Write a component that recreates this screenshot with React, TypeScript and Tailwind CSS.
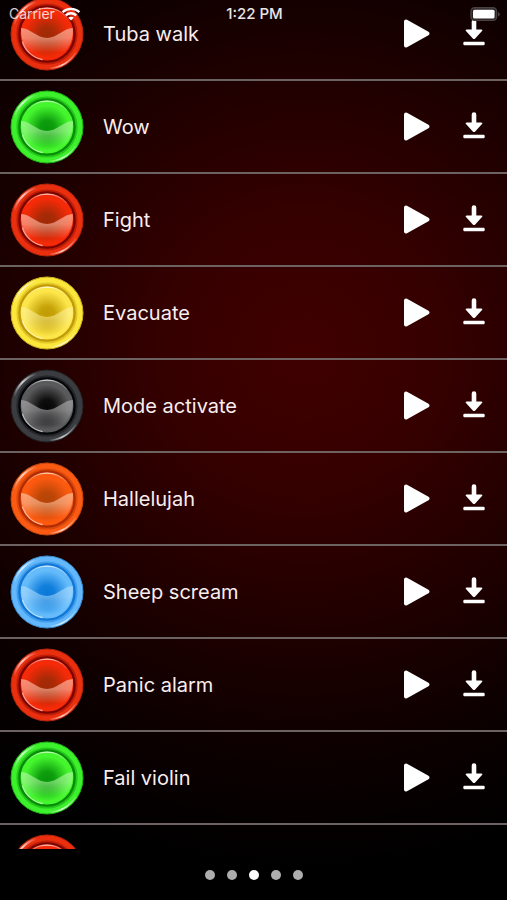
import { useId, useState } from "react";

type Palette = {
  rim: string;
  rimEdge: string;
  groove: string;
  face: string;
  core: string;
  shine: string;
  shineOpacity: number;
};

const palettes: Record<string, Palette> = {
  red: { rim: "#ea2f0e", rimEdge: "#b8250c", groove: "#7c0400", face: "#f52a08", core: "#a02a06", shine: "#f9b29c", shineOpacity: 0.75 },
  green: { rim: "#3df02c", rimEdge: "#1fb814", groove: "#068c06", face: "#45f62e", core: "#08950a", shine: "#b4f8a6", shineOpacity: 0.65 },
  yellow: { rim: "#fbe63c", rimEdge: "#cdb31c", groove: "#c09a08", face: "#fde64a", core: "#c09c02", shine: "#fff3a0", shineOpacity: 0.6 },
  black: { rim: "#3a3c40", rimEdge: "#222325", groove: "#050608", face: "#5a5a5c", core: "#060606", shine: "#a2a2a4", shineOpacity: 0.75 },
  orange: { rim: "#fb5a12", rimEdge: "#c9480e", groove: "#b02c02", face: "#fd5a10", core: "#b54406", shine: "#fdc09c", shineOpacity: 0.7 },
  blue: { rim: "#62b8fb", rimEdge: "#3c8cd2", groove: "#1276d6", face: "#66bcfb", core: "#0878d8", shine: "#b4e0ff", shineOpacity: 0.6 },
};

const sounds = [
  { name: "Tuba walk", color: "red" },
  { name: "Wow", color: "green" },
  { name: "Fight", color: "red" },
  { name: "Evacuate", color: "yellow" },
  { name: "Mode activate", color: "black" },
  { name: "Hallelujah", color: "orange" },
  { name: "Sheep scream", color: "blue" },
  { name: "Panic alarm", color: "red" },
  { name: "Fail violin", color: "green" },
  { name: "", color: "red" },
];

function SoundDisc({ color }: { color: string }) {
  const id = useId();
  const p = palettes[color];

  return (
    <svg viewBox="0 0 74 74" className="size-[74px] shrink-0" aria-hidden="true">
      <defs>
        <radialGradient id={`${id}core`} gradientUnits="userSpaceOnUse" cx="37" cy="38" r="25">
          <stop offset="0" stopColor={p.core} />
          <stop offset="0.3" stopColor={p.core} stopOpacity="0.9" />
          <stop offset="0.7" stopColor={p.core} stopOpacity="0.3" />
          <stop offset="0.9" stopColor={p.core} stopOpacity="0" />
        </radialGradient>
        <linearGradient id={`${id}shine`} gradientUnits="userSpaceOnUse" x1="0" y1="31" x2="0" y2="60">
          <stop offset="0" stopColor={p.shine} stopOpacity={p.shineOpacity} />
          <stop offset="0.35" stopColor={p.shine} stopOpacity={p.shineOpacity * 0.85} />
          <stop offset="0.85" stopColor={p.shine} stopOpacity="0" />
        </linearGradient>
        <linearGradient id={`${id}top`} x1="0" y1="1" x2="1" y2="0">
          <stop offset="0" stopColor="#fff" stopOpacity="0" />
          <stop offset="0.5" stopColor="#fff" stopOpacity="0.75" />
          <stop offset="1" stopColor="#fff" stopOpacity="0" />
        </linearGradient>
        <linearGradient id={`${id}arc`} x1="0" y1="0" x2="1" y2="0">
          <stop offset="0" stopColor="#fff" stopOpacity="0.1" />
          <stop offset="0.5" stopColor="#fff" stopOpacity="0.75" />
          <stop offset="1" stopColor="#fff" stopOpacity="0.1" />
        </linearGradient>
      </defs>
      <circle cx="37" cy="37" r="36" fill={p.rim} stroke={p.rimEdge} />
      <circle cx="37" cy="37" r="28.6" fill="none" stroke={p.groove} strokeOpacity="0.4" strokeWidth="4" />
      <circle cx="37" cy="37" r="27.6" fill={p.face} stroke={p.groove} strokeWidth="2.4" />
      <circle cx="37" cy="37" r="26" fill={`url(#${id}core)`} />
      <path d="M11.2 31C20 31 27 41 37 41S54 31 62.8 31C64.5 47 53 62.5 37 62.5S9.5 47 11.2 31Z" fill={`url(#${id}shine)`} />
      <path d="M17 20.5A26 26 0 0 1 57 20.5" fill="none" stroke={`url(#${id}arc)`} strokeWidth="1.4" />
      <path d="M12.5 45A26 26 0 0 0 32 62.5" fill="none" stroke="#fff" strokeOpacity="0.55" strokeWidth="1.3" strokeLinecap="round" />
      <path d="M4 28A34 34 0 0 1 27 4.500" fill="none" stroke={`url(#${id}top)`} strokeWidth="2" />
      <path d="M40 71.3A34.5 34.5 0 0 0 66 55.5" fill="none" stroke={`url(#${id}arc)`} strokeWidth="1.4" />
    </svg>
  );
}

function PlayIcon() {
  return (
    <svg viewBox="0 0 28 30" className="h-[30px] w-7" aria-hidden="true">
      <path d="M3 2.5L24.5 14.5L3 26.5Z" fill="#fff" stroke="#fff" strokeWidth="4" strokeLinejoin="round" />
    </svg>
  );
}

function DownloadIcon() {
  return (
    <svg viewBox="0 0 24 30" className="h-[30px] w-6" aria-hidden="true" fill="#fff">
      <path d="M9.7 2.6a2.3 2.3 0 0 1 4.6 0V10.6H19.3Q21.2 10.6 20 12.1L13.2 19.4Q12 20.6 10.8 19.4L4 12.1Q2.8 10.6 4.7 10.6H9.7Z" />
      <rect x="1.3" y="22.8" width="21.4" height="3.4" rx="1.2" />
    </svg>
  );
}

function StatusBar() {
  return (
    <header className="absolute inset-x-0 top-0 z-10 grid h-7 grid-cols-3 items-center pl-[9px] pr-[7px] text-sm text-white">
      <div className="flex items-center gap-1.5 text-white/80">
        <span>Carrier</span>
        <svg viewBox="0 0 20 14" className="h-[14px] w-5" aria-hidden="true" fill="none" stroke="#fff" strokeWidth="2.4">
          <path d="M1.6 5.2C6.2 0.8 13.8 0.8 18.4 5.2" />
          <path d="M4.8 8.4C7.8 5.6 12.2 5.6 15.2 8.4" />
          <path d="M10 13.6L7.2 10.8Q10 8.6 12.8 10.8Z" fill="#fff" stroke="none" />
        </svg>
      </div>
      <span className="text-center text-[15px] font-medium text-white/90">1:22 PM</span>
      <svg viewBox="0 0 30 14" className="h-[14px] w-[30px] justify-self-end" aria-hidden="true">
        <rect x="1" y="0.8" width="25.6" height="12.6" rx="3.6" fill="#2a2222" stroke="#4a4242" strokeWidth="1.4" />
        <rect x="3" y="2.7" width="21.6" height="8.8" rx="1.6" fill="#fff" />
        <path d="M28 5v4.4q1.8-.8 1.8-2.2T28 5Z" fill="#4a4242" />
      </svg>
    </header>
  );
}

function SoundRow({ name, color }: { name: string; color: string }) {
  return (
    <li className="flex h-[93px] items-center border-t-2 border-[#6c6262] pl-[10px] pr-[21px]">
      <SoundDisc color={color} />
      <span className="ml-[19px] flex-1 truncate text-xl text-[#f8eeee]">{name}</span>
      <div className="flex gap-[31px]">
        <button type="button" aria-label={`Play ${name}`}>
          <PlayIcon />
        </button>
        <button type="button" aria-label={`Download ${name}`}>
          <DownloadIcon />
        </button>
      </div>
    </li>
  );
}

export default function App() {
  const [page, setPage] = useState(2);

  return (
    <div className="relative flex h-screen flex-col overflow-hidden bg-black bg-[radial-gradient(ellipse_105%_58%_at_60%_39%,#400000_0%,#360000_25%,#220000_50%,#0c0000_78%,#000_100%)] font-['Inter','Liberation_Sans',sans-serif]">
      <StatusBar />
      <main className="min-h-0 flex-1 overflow-hidden">
        {/* scrolled part way into the first row */}
        <ul className="-mt-[14px]">
          {sounds.map((sound, i) => (
            <SoundRow key={i} name={sound.name} color={sound.color} />
          ))}
        </ul>
      </main>
      <nav className="flex h-[51px] shrink-0 items-center justify-center gap-3" aria-label="Pages">
        {[0, 1, 2, 3, 4].map((i) => (
          <button
            key={i}
            type="button"
            aria-label={`Page ${i + 1}`}
            onClick={() => setPage(i)}
            className={`size-[10px] rounded-full ${i === page ? "bg-white" : "bg-[#adadad]"}`}
          />
        ))}
      </nav>
    </div>
  );
}
